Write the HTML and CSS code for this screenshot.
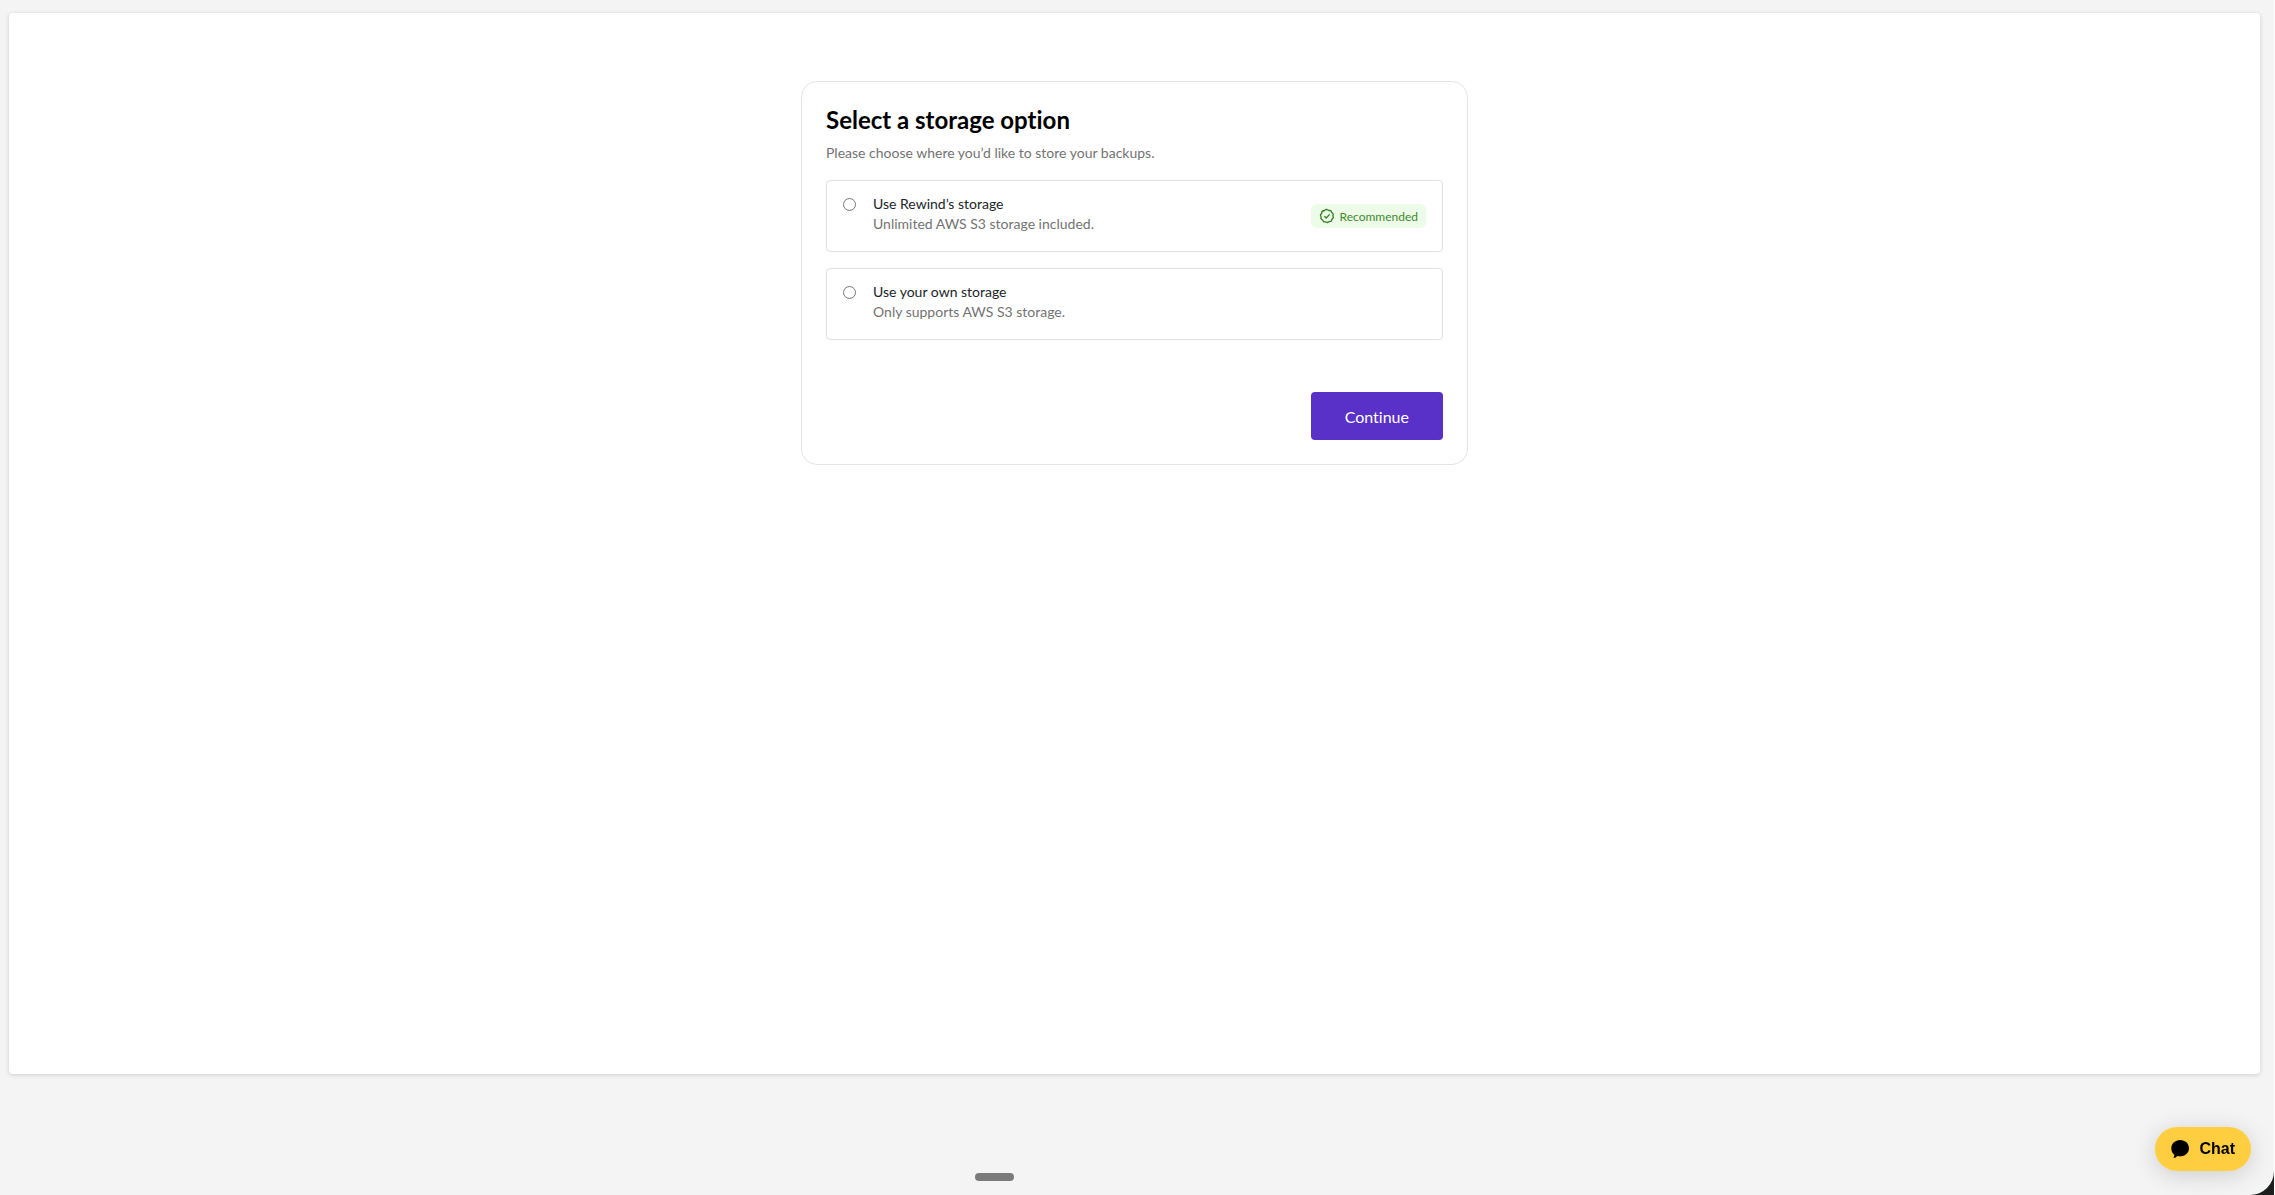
FILE: index.html
```html
<!DOCTYPE html>
<html lang="en">
<head>
<meta charset="utf-8">
<title>Select a storage option</title>
<link rel="stylesheet" href="styles.css">
</head>
<body>
<div class="window">
  <main class="panel">
    <form class="card">
      <h1 class="title">Select a storage option</h1>
      <p class="subtitle">Please choose where you’d like to store your backups.</p>
      <div class="options">
        <label class="option">
          <input class="radio" type="radio" name="storage" value="rewind">
          <span class="option-text">
            <span class="option-name">Use Rewind’s storage</span>
            <span class="option-note">Unlimited AWS S3 storage included.</span>
          </span>
          <span class="badge">
            <svg class="badge-icon" viewBox="0 0 24 24" aria-hidden="true"><path d="M12 2.200L14.700 3.700 17.700 3.900 18.900 6.700 21.300 8.600 20.900 11.600 21.500 14.600 19.400 16.800 18.400 19.700 15.400 20.300 12.800 21.900 10 20.700 6.900 20.700 5.400 18 2.900 16.200 3.100 13.200 2.100 10.300 4 7.900 4.700 4.900 7.700 4.100 9.700 2.500z"/><path d="M8 12.300l2.800 2.700 5.200-5.500"/></svg>
            Recommended
          </span>
        </label>
        <label class="option">
          <input class="radio" type="radio" name="storage" value="own">
          <span class="option-text">
            <span class="option-name">Use your own storage</span>
            <span class="option-note">Only supports AWS S3 storage.</span>
          </span>
        </label>
      </div>
      <div class="actions">
        <button class="continue" type="button">Continue</button>
      </div>
    </form>
  </main>
  <div class="handle"></div>
</div>
<button class="chat" type="button">
  <svg class="chat-icon" viewBox="0 0 18 18" aria-hidden="true"><path d="M9.200 0C14.200 0 18 3.600 18 8.200s-3.800 8.100-8.800 8.100c-1.100 0-2.100-.1-3-.4C5.200 17.300 3.700 18 2.200 17.800c.8-.7 1.200-1.700 1.100-3.100C1.300 13.200.3 10.900.3 8.200.3 3.600 4.200 0 9.200 0z"/></svg>
  Chat
</button>
</body>
</html>
```
FILE: styles.css
```css
* {
  box-sizing: border-box;
}

body {
  margin: 0;
  border-right: 1px solid #fff;
  background: #1c1f1e;
  font-family: Lato, "Liberation Sans", sans-serif;
  font-variant-ligatures: none;
}

.window {
  display: flex;
  flex-direction: column;
  min-height: 100vh;
  padding: 13px 14px 14px 9px;
  background: #f4f4f4;
  border-bottom-right-radius: 24px;
}

.panel {
  flex: 1;
  padding: 68px 24px;
  background: #fff;
  border-radius: 4px;
  box-shadow: 0 1px 4px rgba(0, 0, 0, 0.16);
}

.card {
  max-width: 667px;
  margin: 0 auto;
  padding: 24px;
  border: 1px solid #e5e5e8;
  border-radius: 16px;
}

.title {
  margin: 0;
  color: #000;
  font-size: 24px;
  font-weight: 700;
  line-height: 28px;
}

.subtitle {
  margin: 8px 0 16px;
  color: #737373;
  font-size: 14px;
  line-height: 22px;
}

.options {
  display: grid;
  gap: 16px;
}

.option {
  display: flex;
  gap: 16px;
  min-height: 72px;
  padding: 13px 16px;
  border: 1px solid #e0e0e6;
  border-radius: 4px;
}

.radio {
  width: 13px;
  height: 13px;
  margin: 4px 1px 0 0;
}

.option-text {
  display: flex;
  flex: 1;
  flex-direction: column;
  font-size: 14px;
  line-height: 20px;
}

.option-name {
  color: #212529;
}

.option-note {
  color: #737373;
}

.badge {
  display: flex;
  align-items: center;
  align-self: center;
  gap: 5px;
  height: 24px;
  padding: 0 8px;
  border-radius: 6px;
  background: #edfbe9;
  color: #3f8a2c;
  font-size: 12px;
}

.badge-icon {
  width: 16px;
  height: 16px;
  fill: none;
  stroke: #377f24;
  stroke-width: 2;
  stroke-linejoin: round;
}

.actions {
  display: flex;
  justify-content: flex-end;
  margin-top: 52px;
}

.continue {
  height: 48px;
  padding: 0 34px;
  border: 0;
  border-radius: 4px;
  background: #5930c8;
  color: #fff;
  font-family: inherit;
  font-size: 16px;
  font-variant-ligatures: inherit;
}

.handle {
  width: 39px;
  height: 8px;
  margin: 99px 0 0 966px;
  border-radius: 4px;
  background: #7b7b7b;
}

.chat {
  position: fixed;
  right: 24px;
  bottom: 24px;
  display: flex;
  align-items: center;
  gap: 10px;
  height: 44px;
  padding: 0 16px;
  border: 0;
  border-radius: 22px;
  background: #ffce40;
  box-shadow: 0 4px 24px rgba(0, 0, 0, 0.16);
  color: #000;
  font-family: "Liberation Sans", sans-serif;
  font-size: 16px;
  font-weight: 700;
}

.chat-icon {
  width: 18px;
  height: 18px;
}
```
